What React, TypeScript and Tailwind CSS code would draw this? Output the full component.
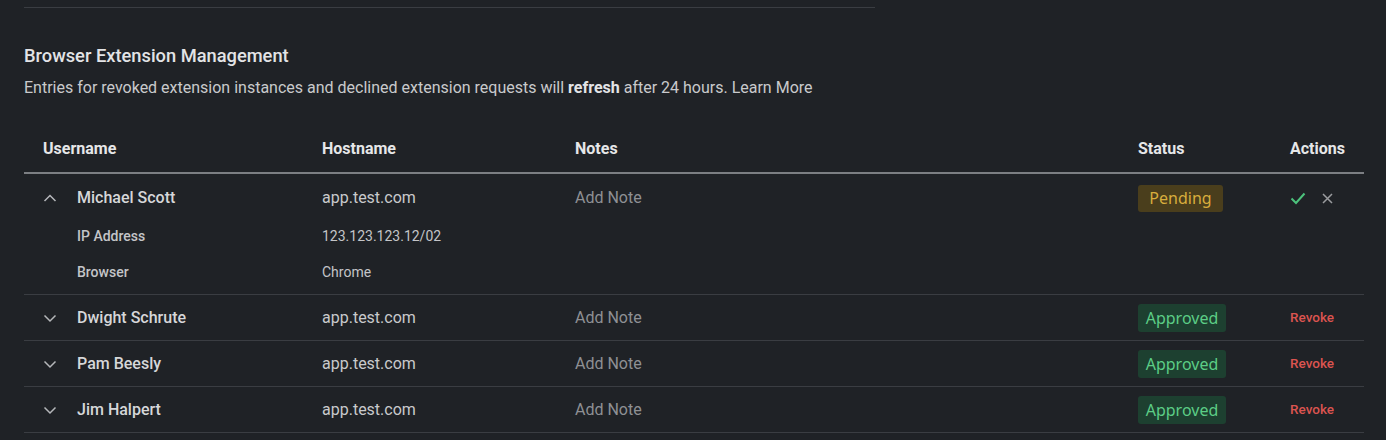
import React from "react";

const cols = "grid grid-cols-[298px_253px_563px_152px_1fr] items-center";

function Chevron({ up }: { up?: boolean }) {
  return (
    <svg width="14" height="14" viewBox="0 0 14 14" className="text-[#b5b7ba]">
      <path
        d={up ? "M1.5 10 L7 4.5 L12.5 10" : "M1.5 4.5 L7 10 L12.5 4.5"}
        fill="none"
        stroke="currentColor"
        strokeWidth="1.5"
      />
    </svg>
  );
}

function Badge({ kind }: { kind: "pending" | "approved" }) {
  return kind === "pending" ? (
    <span className="inline-flex h-[27px] w-[85px] items-center justify-center rounded-[3px] bg-[#4a3e1c] text-[16px] text-[#d8ad3c] [font-family:'Noto_Sans',sans-serif]">
      Pending
    </span>
  ) : (
    <span className="inline-flex h-[28px] w-[88px] items-center justify-center rounded-[3px] bg-[#1d4030] text-[16px] text-[#5ccd86] [font-family:'Noto_Sans',sans-serif]">
      Approved
    </span>
  );
}

const rows = [
  { name: "Dwight Schrute" },
  { name: "Pam Beesly" },
  { name: "Jim Halpert" },
];

export default function App() {
  return (
    <div className="h-[440px] w-[1386px] overflow-hidden bg-[#1f2226] [font-family:Roboto,sans-serif]">
      <div className="px-6">
        <div className="mt-[7px] h-px w-[851px] bg-[#3a3d42]" />
        <h2 className="mt-[37px] text-[18.3px] font-medium leading-[22px] text-[#e3e4e6]">
          Browser Extension Management
        </h2>
        <p className="mt-[11px] text-[16px] leading-[20px] text-[#c9cacc]">
          Entries for revoked extension instances and declined extension requests will{" "}
          <b className="font-bold text-[#e3e4e6]">refresh</b> after 24 hours. Learn More
        </p>

        <div className="mt-[24px] w-[1340px]">
          <div className={`${cols} h-[52px] border-b-2 border-[#7c7f83] pt-[3px] text-[16px] font-bold text-[#e6e7e8]`}>
            <div className="pl-[19px]">Username</div>
            <div>Hostname</div>
            <div>Notes</div>
            <div>Status</div>
            <div>Actions</div>
          </div>

          <div className="border-b border-[#3a3d42] pb-[4px]">
            <div className={`${cols} h-[44px] pt-[4px] text-[16px]`}>
              <div className="flex items-center pl-[19px]">
                <Chevron up />
                <span className="ml-[20px] font-medium text-[#d6d7d9]">Michael Scott</span>
              </div>
              <div className="text-[#c9cacc]">app.test.com</div>
              <div className="text-[#8e9094]">Add Note</div>
              <div>
                <Badge kind="pending" />
              </div>
              <div className="flex items-center gap-[16px]">
                <svg width="16" height="14" viewBox="0 0 16 14">
                  <path d="M1.5 7.5 L6 12 L14.5 2.5" fill="none" stroke="#4cc27c" strokeWidth="2" />
                </svg>
                <svg width="11" height="11" viewBox="0 0 11 11">
                  <path d="M1 1 L10 10 M10 1 L1 10" fill="none" stroke="#9a9c9f" strokeWidth="1.5" />
                </svg>
              </div>
            </div>
            <div className={`${cols} h-[36px] text-[14px] text-[#c4c5c8]`}>
              <div className="pl-[53px] font-medium">IP Address</div>
              <div>123.123.123.12/02</div>
            </div>
            <div className={`${cols} h-[36px] text-[14px] text-[#c4c5c8]`}>
              <div className="pl-[53px] font-medium">Browser</div>
              <div>Chrome</div>
            </div>
          </div>

          {rows.map((r) => (
            <div key={r.name} className={`${cols} h-[46px] border-b border-[#3a3d42] text-[16px]`}>
              <div className="flex items-center pl-[19px]">
                <Chevron />
                <span className="ml-[20px] font-medium text-[#d6d7d9]">{r.name}</span>
              </div>
              <div className="text-[#c9cacc]">app.test.com</div>
              <div className="text-[#8e9094]">Add Note</div>
              <div>
                <Badge kind="approved" />
              </div>
              <div className="text-[13.5px] font-medium text-[#db5450]">Revoke</div>
            </div>
          ))}
        </div>
      </div>
    </div>
  );
}
